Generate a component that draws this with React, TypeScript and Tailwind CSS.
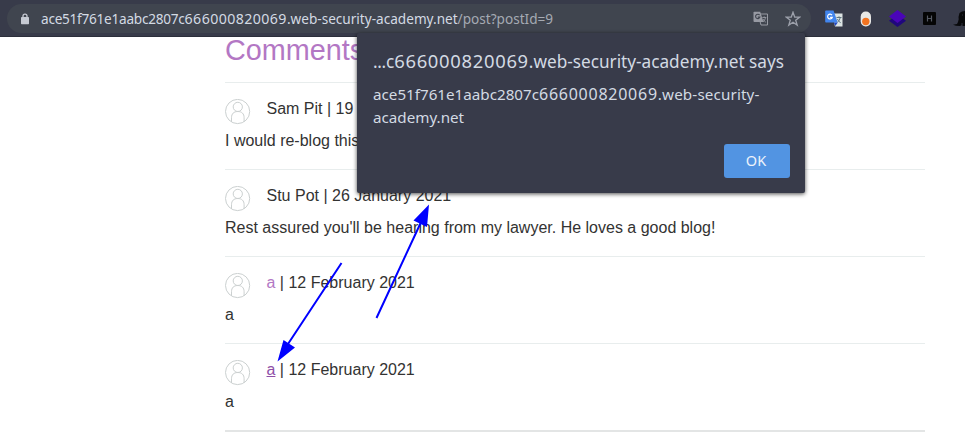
import React from "react";

const ui = "font-['Noto_Sans',sans-serif]";

function Avatar() {
  return (
    <svg className="mt-[16px] h-[26px] w-[26px] shrink-0" viewBox="0 0 26 26" fill="none" stroke="#cbd0d0" strokeWidth="1">
      <circle cx="12.6" cy="12.5" r="12.1" />
      <circle cx="12.8" cy="7.9" r="4.6" />
      <path d="M6.5 23v-4.300c0-4 2.300-6.200 6.300-6.200s6.300 2.200 6.300 6.200V23" />
    </svg>
  );
}

function Comment({ author, date, body, link, underlined }: { author: string; date: string; body: string; link?: boolean; underlined?: boolean }) {
  return (
    <article className="h-[87px] border-t border-[#e8eded]">
      <div className="flex h-[42px] gap-[15.5px]">
        <Avatar />
        <p className="mt-[14px] whitespace-nowrap leading-6">
          <span className={link ? (underlined ? "text-[#8f4fa8] underline" : "text-[#b377c4]") : ""}>{author}</span> | {date}
        </p>
      </div>
      <p className="mt-[4px] whitespace-nowrap leading-6">{body}</p>
    </article>
  );
}

function TranslateGrey() {
  return (
    <svg className="h-[15px] w-[15px]" viewBox="0 0 15 15">
      <path d="M5 3h9.5v11H8z" fill="none" stroke="#979aa3" />
      <path d="M1.2.7h6L10.5 11H1.2Q.5 11 .5 10V1.5Q.5.7 1.2.7z" fill="#979aa3" />
      <path d="M6.6 4.1a2.2 2.2 0 1 0 .3 2H4.8" fill="none" stroke="#40444f" strokeWidth="1.1" />
      <path d="M9.3 6.5h4M11.2 5.4v1M12.5 6.5c-.3 2-1.3 3.5-2.5 4.4M10 8c.6 1.500 1.800 2.600 2.800 3.200" fill="none" stroke="#979aa3" strokeWidth=".9" />
    </svg>
  );
}

function TranslateColour() {
  return (
    <svg className="h-[17px] w-[18px]" viewBox="0 0 18 17">
      <path d="M7 3.5h10.500v13H10z" fill="#dce3e3" />
      <path d="M1 .5h7.500l4.200 12H1q-.8 0-.8-.8V1.200Q.2.5 1 .5z" fill="#4285ee" />
      <path d="M8.8 12.5h4L10.300 16z" fill="#2448c0" />
      <path d="M7 5.200a2.400 2.400 0 1 0 .3 2.100H5.100" fill="none" stroke="#fff" strokeWidth="1.2" />
      <path d="M11.500 7.500h5M14 6.300v1M15.200 7.500c-.4 2.200-1.500 3.800-2.700 4.800M12.500 9c.7 1.800 2 3 3.200 3.700" fill="none" stroke="#5e7580" />
    </svg>
  );
}

export default function App() {
  return (
    <div className="relative h-[444px] w-[965px] overflow-hidden bg-white font-['Liberation_Sans',Arial,sans-serif] text-base text-[#333332]">
      <header className={`flex h-[37px] items-start border-b border-[#2c2f3b] bg-[#383b4a] ${ui}`}>
        <div className="ml-[7px] mt-[4px] flex h-[29px] w-[804px] items-center rounded-full bg-[#40454f] pl-[14px] pr-[10px]">
          <svg className="h-[12px] w-[8px]" viewBox="0 0 8 12">
            <path d="M2 5V3.100a2 2 0 0 1 4 0V5" fill="none" stroke="#c6cad3" strokeWidth="1.3" />
            <rect y="4" width="8" height="7.300" rx=".7" fill="#c6cad3" />
          </svg>
          <span className="ml-[12px] whitespace-nowrap text-[13.6px] leading-5 text-[#d3dae3]">
            <span className="tracking-[-0.25px]">ace51f761e1aabc2807c</span><span className="text-[14.2px] tracking-[0.41px]">666000820069</span><span>.web-security-academy.net</span><span className="text-[#a5aab3]">/post?postId=9</span>
          </span>
          <div className="ml-auto flex items-center gap-[17px]">
            <TranslateGrey />
            <svg className="h-[16px] w-[16px]" viewBox="0 0 16 16" fill="none" stroke="#9ca0aa" strokeWidth="1.3">
              <path d="m8 1.2 1.700 4.800 5 .1-4 3.100 1.500 4.900L8 11.200l-4.200 2.900 1.500-4.900-4-3.100 5-.1z" />
            </svg>
          </div>
        </div>
        <div className="ml-[14px] mt-[10px] flex h-[17px] items-center">
          <TranslateColour />
          <svg className="ml-[17px] h-[16px] w-[12px]" viewBox="0 0 12 16">
            <rect x=".7" y=".5" width="10.300" height="15" rx="5" fill="#e8e8e6" />
            <circle cx="5.8" cy="10.500" r="3.700" fill="#f27321" />
          </svg>
          <svg className="ml-[17px] h-[17px] w-[17px]" viewBox="0 0 17 17">
            <path d="m0 10.800 3-2.400h11l3 2.400L8.500 17z" fill="#20077d" />
            <path d="M8.500 0 17 6.500 8.500 13 0 6.500z" fill="#4a04b8" />
          </svg>
          <svg className="ml-[17px] h-[13px] w-[13px]" viewBox="0 0 13 13">
            <rect width="13" height="13" rx="1" fill="#050505" />
            <path d="M4.500 3.500v6M8.500 3.500v6M4.500 6.500h4" stroke="#555963" strokeWidth="1.200" />
          </svg>
          <svg className="ml-[17px] h-[16px] w-[12px]" viewBox="0 0 12 16">
            <path d="M5.500 6 6.500 2 9 .5 12 0v15h-2l-1-1-2 1-4-.2-3-1 4-.8 1-2 .7-2.700z" fill="#08090b" />
            <path d="M9 4h1M8 13h2" stroke="#383b4a" strokeWidth=".8" />
          </svg>
        </div>
      </header>

      <main className="ml-[225px] w-[700px]">
        <h1 className="h-[45px] text-[28.8px] leading-[27px] text-[#b377c4]">Comments</h1>
        <Comment author="Sam Pit" date="19 January 2021" body="I would re-blog this" />
        <Comment author="Stu Pot" date="26 January 2021" body="Rest assured you'll be hearing from my lawyer. He loves a good blog!" />
        <Comment author="a" date="12 February 2021" body="a" link />
        <Comment author="a" date="12 February 2021" body="a" link underlined />
        <hr className="border-t-2 border-[#e3e5e5]" />
      </main>

      <section role="dialog" className={`absolute left-[357px] top-[33px] h-[160px] w-[448px] rounded-[2px] bg-[#383b4a] px-4 pt-[17px] text-[#d3dae3] shadow-[0_1px_4px_rgba(0,0,0,0.7)] ${ui}`}>
        <h2 className="h-6 whitespace-nowrap text-[17.2px] leading-6">
          <span className="tracking-[-0.3px]">...</span>c<span className="text-[18.4px] leading-none tracking-[0.7px]">666000820069</span>.web-security-academy.net says
        </h2>
        <p className="mt-[9px] h-[46px] whitespace-nowrap text-[15.2px] leading-[23px]">
          ace51f761e1aabc2807c<span className="text-[16px] leading-none tracking-[0.75px]">666000820069</span><span className="tracking-[0.15px]">.web-security-</span><br />academy.net
        </p>
        <button className="ml-[350px] mt-[15px] block h-[34px] w-[66px] translate-x-px rounded-[3px] bg-[#5294e2] pr-[2px] text-[14.5px] text-[#edf3fb]">OK</button>
      </section>

      <svg className="absolute inset-0 h-[444px] w-[965px]" viewBox="0 0 965 444" fill="#0000ff" stroke="#0000ff">
        <path d="M341.500 263 286 347M376.500 318 422 220" fill="none" strokeWidth="2" />
        <path d="m277.500 361.500 6-21.500 11.500 7.500zM429 204.500 413.500 220.500l13.500 6.500z" stroke="none" />
      </svg>
    </div>
  );
}
